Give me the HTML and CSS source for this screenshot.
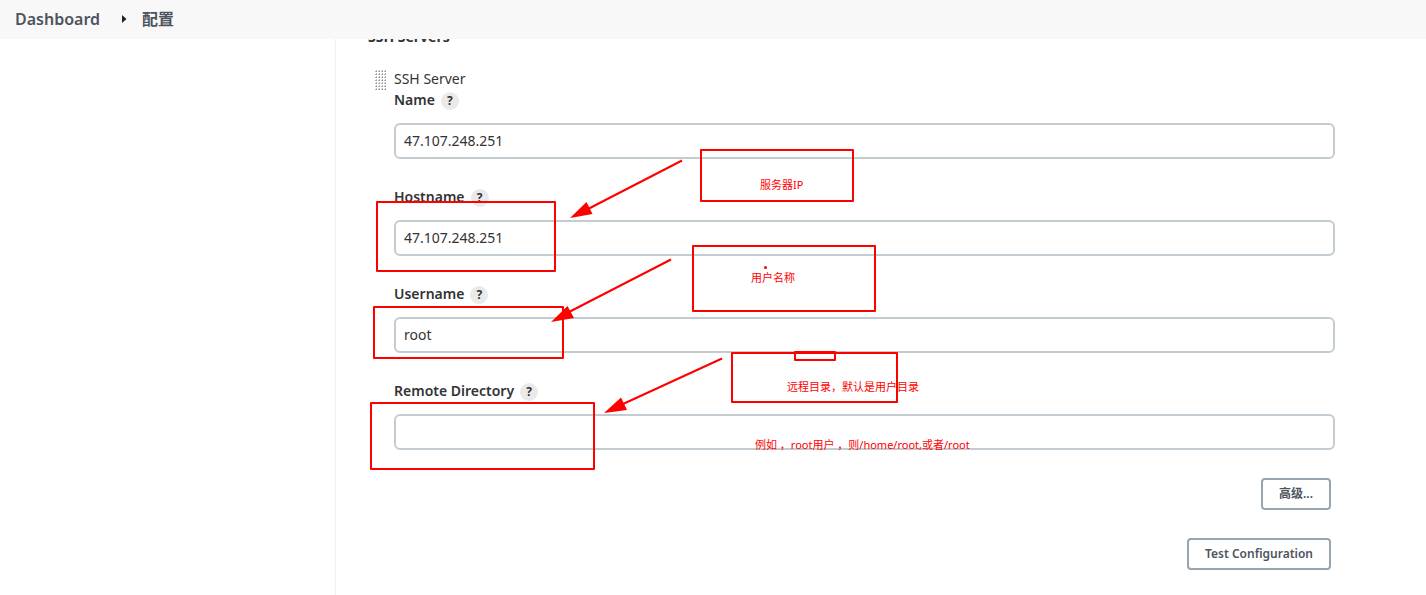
FILE: index.html
```html
<!DOCTYPE html>
<html lang="zh-CN">
<head>
<meta charset="utf-8">
<title>配置</title>
<link rel="stylesheet" href="styles.css">
</head>
<body>
<nav class="breadcrumbs">
  <a href="#" class="crumb">Dashboard</a>
  <svg class="crumb-arrow" width="5" height="8" viewBox="0 0 5 8" aria-hidden="true"><path d="M0 0L4.500 4L0 8Z"/></svg>
  <a href="#" class="crumb">配置</a>
</nav>
<div class="page">
  <aside class="side-panel"></aside>
  <main class="main-panel">
    <h2 class="section-title">SSH Servers</h2>
    <section class="server">
      <svg class="grip" width="12" height="20" viewBox="0 0 12 20" aria-hidden="true">
        <defs><pattern id="dots" width="3" height="3" patternUnits="userSpaceOnUse"><rect x="1" width="1" height="2" opacity="0.6"/><rect y="1" width="2" height="1" opacity="0.6"/></pattern></defs>
        <rect width="12" height="20" fill="url(#dots)"/>
      </svg>
      <form class="server-form">
        <div class="server-heading">SSH Server</div>
        <div class="field">
          <div class="label-row"><label for="name">Name</label><button type="button" class="help" aria-label="Help: Name">?</button></div>
          <input class="text-box" id="name" type="text" value="47.107.248.251">
        </div>
        <div class="field">
          <div class="label-row"><label for="hostname">Hostname</label><button type="button" class="help" aria-label="Help: Hostname">?</button></div>
          <input class="text-box" id="hostname" type="text" value="47.107.248.251">
        </div>
        <div class="field">
          <div class="label-row"><label for="username">Username</label><button type="button" class="help" aria-label="Help: Username">?</button></div>
          <input class="text-box" id="username" type="text" value="root">
        </div>
        <div class="field">
          <div class="label-row"><label for="directory">Remote Directory</label><button type="button" class="help" aria-label="Help: Remote Directory">?</button></div>
          <input class="text-box" id="directory" type="text" value="">
        </div>
        <div class="actions">
          <button type="button" class="button">高级...</button>
          <button type="button" class="button">Test Configuration</button>
        </div>
      </form>
    </section>
  </main>
</div>
<svg class="annotations" width="1426" height="595" viewBox="0 0 1426 595">
  <g class="outline">
    <rect x="377" y="202" width="178" height="69"/>
    <rect x="374" y="307" width="189" height="51"/>
    <rect x="371" y="403" width="223" height="66"/>
    <rect x="701" y="150" width="152" height="51"/>
    <rect x="693" y="246" width="182" height="65"/>
    <rect x="732" y="353" width="165" height="49"/>
    <rect x="795" y="352" width="40" height="8"/>
    <path d="M682 160.500L588 209M671 259.500L569 312M722 358.500L623 404"/>
  </g>
  <g class="solid">
    <path d="M570 218L586.500 202L592.500 214Z"/>
    <path d="M551 322L567.500 306L574 318Z"/>
    <path d="M604 413L621 397.500L627 410Z"/>
    <circle cx="765.500" cy="267.500" r="1.500"/>
  </g>
  <g class="note">
    <text x="760" y="189">服务器IP</text>
    <text x="751" y="282">用户名称</text>
    <text x="787" y="391">远程目录，默认是用户目录</text>
    <text x="755" y="449">例如 ，root用户 ，则/home/root,或者/root</text>
  </g>
</svg>
</body>
</html>
```
FILE: styles.css
```css
* { box-sizing: border-box; }

body {
  margin: 0;
  height: 100vh;
  display: flex;
  flex-direction: column;
  overflow: hidden;
  background: #fff;
  color: #333;
  font-family: "Noto Sans", "Noto Sans CJK SC", sans-serif;
  font-size: 14px;
  line-height: 20px;
}

.breadcrumbs {
  display: flex;
  align-items: center;
  flex: none;
  height: 39px;
  padding: 0 15px 2px;
  background: #f8f8f8;
}

.crumb {
  color: #4d545d;
  font-size: 16px;
  font-weight: 600;
  text-decoration: none;
}

.crumb-arrow {
  margin: 0 15px 0 22px;
  fill: #222;
}

.page {
  display: flex;
  flex: 1;
  min-height: 0;
}

.side-panel {
  flex: none;
  width: 336px;
  border-right: 1px solid #f0f0f0;
}

.main-panel {
  flex: 1;
  overflow: hidden;
  padding: 0 91px 0 32px;
}

.section-title {
  margin: -12px 0 22px;
  font-size: 14px;
  line-height: 20px;
  font-weight: 700;
}

.server {
  display: flex;
  gap: 7px;
  padding-left: 7px;
}

.grip {
  flex: none;
  margin-top: 1px;
  fill: #888;
}

.server-form { flex: 1; }

.server-heading { margin-bottom: 3px; }

.field { margin-bottom: 30px; }

.label-row {
  display: flex;
  align-items: center;
  gap: 6px;
  height: 18px;
  margin-bottom: 13px;
  font-weight: 600;
}

.label-row label { padding-bottom: 2px; }

.help {
  width: 18px;
  height: 18px;
  padding: 0;
  border: 0;
  border-radius: 50%;
  background: #eaeaea;
  color: #333;
  font: 700 12px/18px "Noto Sans", sans-serif;
}

.text-box {
  display: block;
  width: 100%;
  height: 36px;
  padding: 0 8px 2px;
  border: 2px solid #c3ccd1;
  border-radius: 6px;
  background: #fff;
  color: #333;
  font: inherit;
}

.actions {
  display: flex;
  flex-direction: column;
  align-items: flex-end;
  gap: 28px;
  margin-top: -2px;
  padding-right: 4px;
}

.button {
  height: 32px;
  padding: 0 16px;
  border: 2px solid #98a4ae;
  border-radius: 4px;
  background: #fff;
  color: #4d545d;
  font: 600 12px/16px "Noto Sans", "Noto Sans CJK SC", sans-serif;
}

.annotations {
  position: absolute;
  top: 0;
  left: 0;
  pointer-events: none;
}

.outline {
  fill: none;
  stroke: #f00;
  stroke-width: 2;
  stroke-linejoin: round;
}

.solid { fill: #f00; }

.note {
  fill: #f00;
  font-size: 11px;
}
```
